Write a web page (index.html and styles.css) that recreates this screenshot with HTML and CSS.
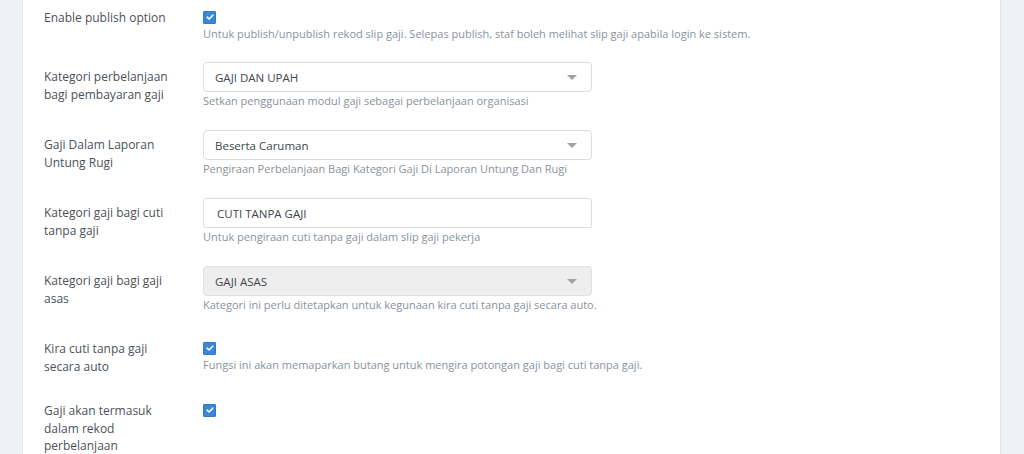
FILE: index.html
```html
<!DOCTYPE html>
<html>
<head>
<meta charset="utf-8">
<link rel="stylesheet" href="styles.css">
</head>
<body>
<div class="page">
  <div class="card">
    <div class="row">
      <div class="label">Enable publish option</div>
      <div class="control">
        <div class="check-wrap"><span class="check"><svg viewBox="0 0 12 12" width="12" height="12"><path d="M3.2 6.2 L5.1 8 L8.8 4.2" fill="none" stroke="#fff" stroke-width="1.6" stroke-linecap="round" stroke-linejoin="round"/></svg></span></div>
        <div class="help">Untuk publish/unpublish rekod slip gaji. Selepas publish, staf boleh melihat slip gaji apabila login ke sistem.</div>
      </div>
    </div>

    <div class="row">
      <div class="label">Kategori perbelanjaan<br>bagi pembayaran gaji</div>
      <div class="control">
        <div class="select"><span>GAJI DAN UPAH</span><b class="arrow"></b></div>
        <div class="help">Setkan penggunaan modul gaji sebagai perbelanjaan organisasi</div>
      </div>
    </div>

    <div class="row">
      <div class="label">Gaji Dalam Laporan<br>Untung Rugi</div>
      <div class="control">
        <div class="select"><span>Beserta Caruman</span><b class="arrow"></b></div>
        <div class="help">Pengiraan Perbelanjaan Bagi Kategori Gaji Di Laporan Untung Dan Rugi</div>
      </div>
    </div>

    <div class="row">
      <div class="label">Kategori gaji bagi cuti<br>tanpa gaji</div>
      <div class="control">
        <div class="input">CUTI TANPA GAJI</div>
        <div class="help">Untuk pengiraan cuti tanpa gaji dalam slip gaji pekerja</div>
      </div>
    </div>

    <div class="row">
      <div class="label">Kategori gaji bagi gaji<br>asas</div>
      <div class="control">
        <div class="select disabled"><span>GAJI ASAS</span><b class="arrow"></b></div>
        <div class="help">Kategori ini perlu ditetapkan untuk kegunaan kira cuti tanpa gaji secara auto.</div>
      </div>
    </div>

    <div class="row">
      <div class="label">Kira cuti tanpa gaji<br>secara auto</div>
      <div class="control">
        <div class="check-wrap"><span class="check"><svg viewBox="0 0 12 12" width="12" height="12"><path d="M3.2 6.2 L5.1 8 L8.8 4.2" fill="none" stroke="#fff" stroke-width="1.6" stroke-linecap="round" stroke-linejoin="round"/></svg></span></div>
        <div class="help">Fungsi ini akan memaparkan butang untuk mengira potongan gaji bagi cuti tanpa gaji.</div>
      </div>
    </div>

    <div class="row">
      <div class="label">Gaji akan termasuk<br>dalam rekod<br>perbelanjaan</div>
      <div class="control">
        <div class="check-wrap"><span class="check"><svg viewBox="0 0 12 12" width="12" height="12"><path d="M3.2 6.2 L5.1 8 L8.8 4.2" fill="none" stroke="#fff" stroke-width="1.6" stroke-linecap="round" stroke-linejoin="round"/></svg></span></div>
      </div>
    </div>
  </div>
</div>
</body>
</html>
```

FILE: styles.css
```css
html, body {
  margin: 0;
  padding: 0;
  background: #eef2f6;
  height: 454px;
  overflow: hidden;
}
body {
  font-family: "Open Sans", "Liberation Sans", sans-serif;
}
.page {
  padding: 0 23px 0 22px;
}
.card {
  background: #ffffff;
  border-left: 1px solid #e4e8ec;
  border-right: 1px solid #e4e8ec;
  padding: 3px 0 0 21px;
  min-height: 460px;
  box-sizing: border-box;
}
.row {
  display: flex;
  margin-bottom: 21px;
}
.row:first-child {
  margin-bottom: 20px;
}
.label {
  width: 159px;
  flex: none;
  padding-top: 6px;
  font-size: 12px;
  font-weight: 500;
  line-height: 17.5px;
  color: #4b5159;
}
.control {
  flex: 1;
}
.check-wrap {
  height: 22px;
  padding-top: 7px;
  box-sizing: border-box;
}
.check {
  display: block;
  width: 13px;
  height: 13px;
  border-radius: 2px;
  background: #3a87d8;
  box-shadow: inset 0 0 0 1px #2f79c7;
}
.check svg {
  display: block;
  margin: 0.5px 0 0 0.5px;
}
.help {
  font-size: 11px;
  line-height: 17px;
  color: #8a929c;
  white-space: nowrap;
}
.select, .input {
  width: 389px;
  height: 30px;
  box-sizing: border-box;
  border: 1px solid #d8dde3;
  border-radius: 4px;
  display: flex;
  align-items: center;
  justify-content: space-between;
  padding: 0 14px 0 11px;
  font-size: 11.5px;
  color: #40464e;
  background: #fff;
}
.input {
  padding-left: 13px;
  border-radius: 3px;
}
.select.disabled {
  background: #eeeeee;
  border-color: #dcdfe3;
}
.arrow {
  width: 0;
  height: 0;
  border-left: 5px solid transparent;
  border-right: 5px solid transparent;
  border-top: 5px solid #9ea3a9;
}
```
